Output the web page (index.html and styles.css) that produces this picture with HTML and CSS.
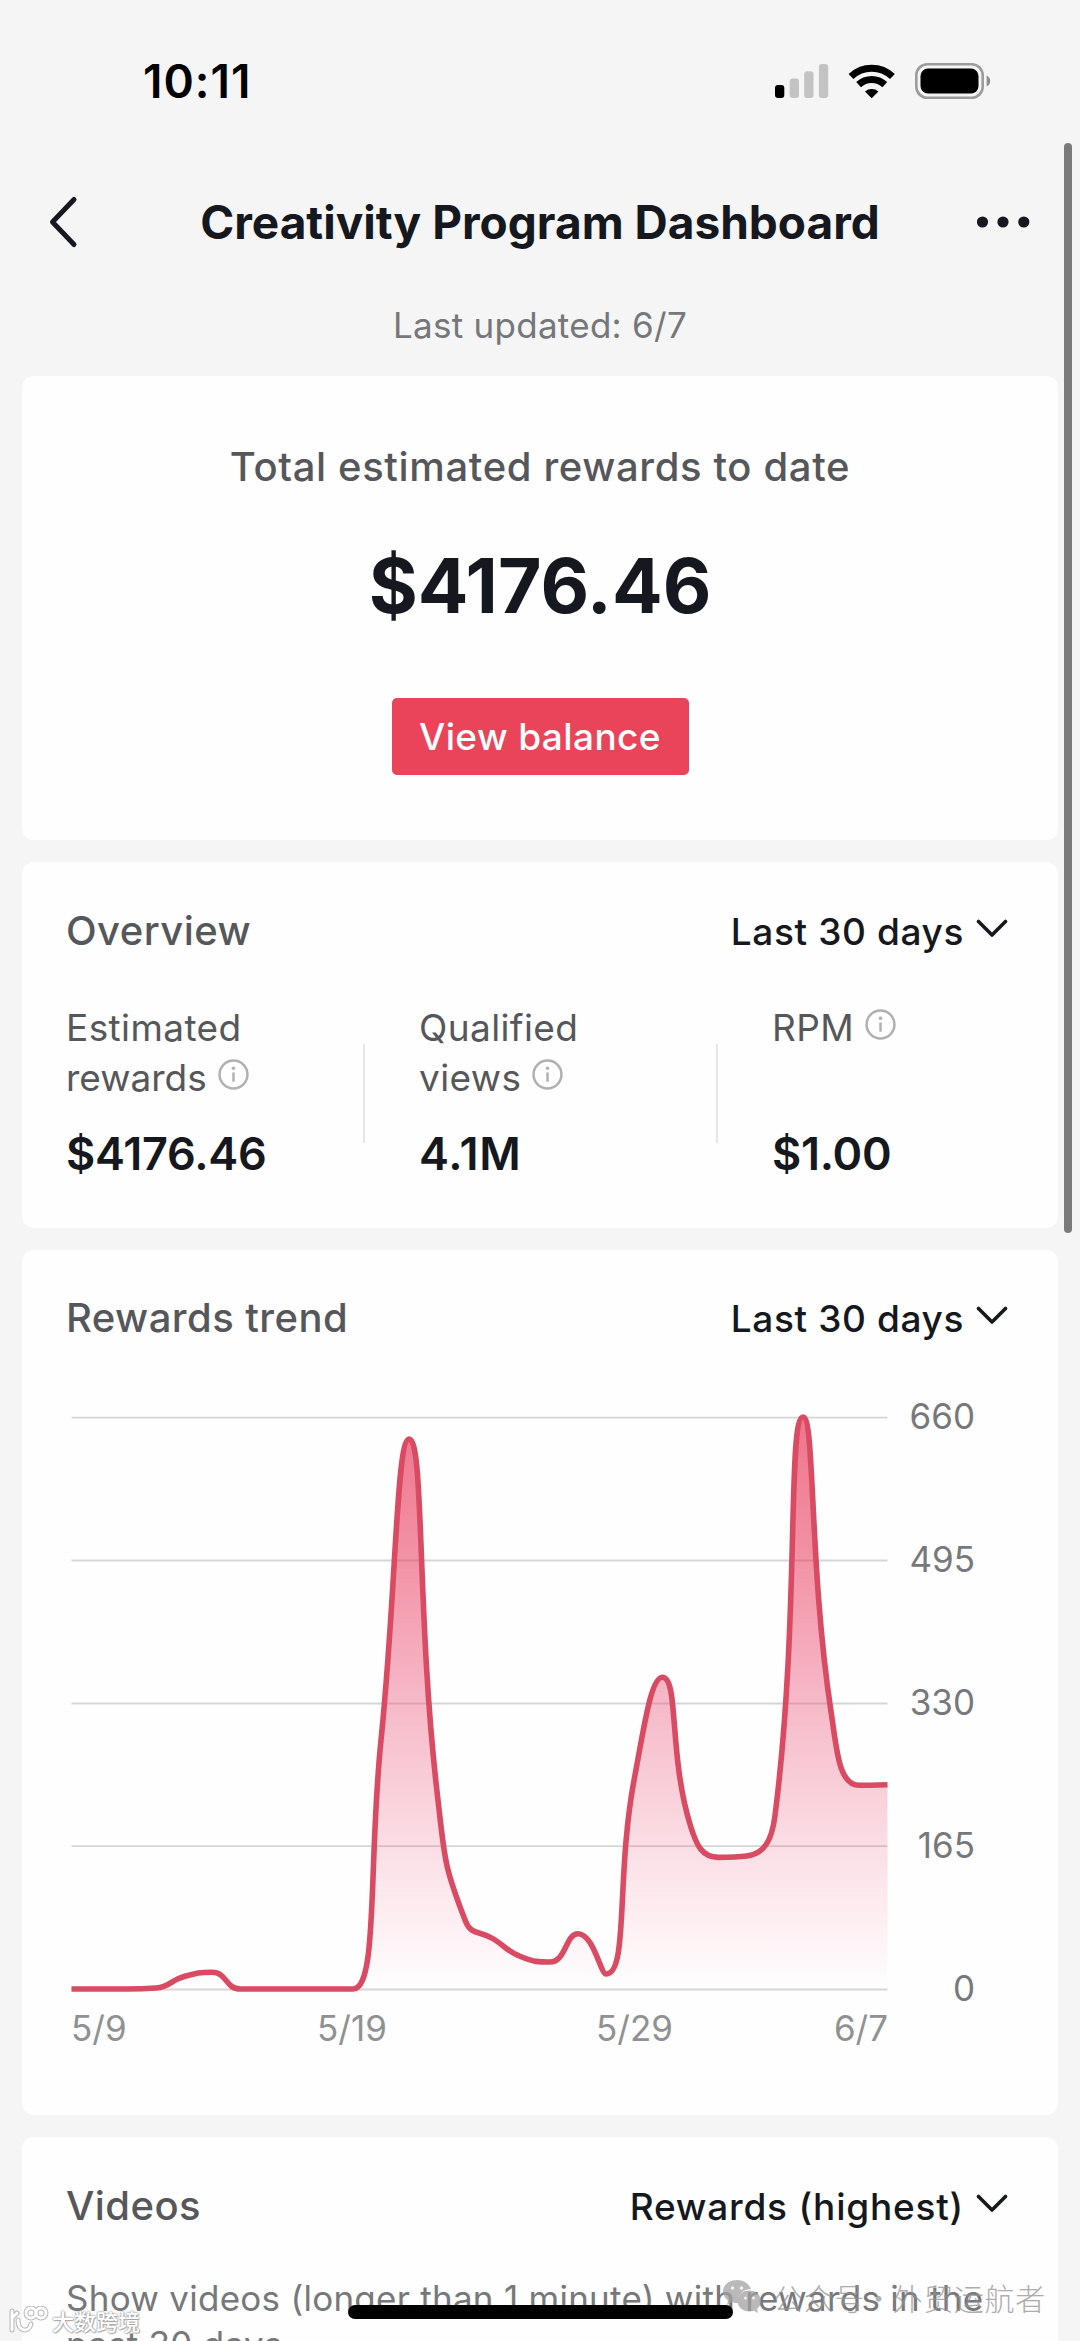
FILE: index.html
```html
<!DOCTYPE html>
<html lang="en">
<head>
<meta charset="utf-8">
<title>Creativity Program Dashboard</title>
<link rel="stylesheet" href="styles.css">
</head>
<body>
<div class="screen">
  <header class="status">
    <span class="time">10:11</span>
    <svg class="status-icons" width="220" height="40" viewBox="774 60 220 40">
      <rect x="775" y="84" width="9.3" height="13" rx="3"/>
      <g fill="#c3c3c3">
        <rect x="789.7" y="77.5" width="9.3" height="19.5" rx="3"/>
        <rect x="804.2" y="70.3" width="9.3" height="26.7" rx="3"/>
        <rect x="818.9" y="63" width="9.3" height="34" rx="3"/>
      </g>
      <g fill="none" stroke="#000" stroke-width="7">
        <path d="M851 75.5A30 30 0 0 1 892.4 75.5"/>
        <path d="M858.6 83.6A19.2 19.2 0 0 1 884.8 83.6"/>
      </g>
      <path d="M871.7 97.2L865 90.4A10.5 10.5 0 0 1 878.4 90.4Z"/>
      <rect x="916.3" y="63.3" width="66.4" height="33.4" rx="11" fill="none" stroke="#9c9c9c" stroke-width="2.6"/>
      <rect x="920.5" y="67.5" width="58" height="25" rx="7.5"/>
      <path d="M986.6 74.5Q990.2 76 990.2 80T986.6 85.5Z" fill="#8f8f8f"/>
    </svg>
  </header>
  <nav class="nav">
    <svg class="back" width="34" height="56" viewBox="0 0 34 56"><path d="M28 5.5L6.5 28L28 50.5"/></svg>
    <h1>Creativity Program Dashboard</h1>
    <svg class="more" width="54" height="14" viewBox="0 0 54 14"><circle cx="5.5" cy="7" r="5.6"/><circle cx="26" cy="7" r="5.6"/><circle cx="46.8" cy="7" r="5.6"/></svg>
  </nav>
  <p class="updated">Last updated: 6/7</p>

  <main class="cards">
    <section class="card total">
      <h2 class="total-label">Total estimated rewards to date</h2>
      <p class="total-value">$4176.46</p>
      <button class="balance">View balance</button>
    </section>

    <section class="card overview">
      <div class="head">
        <h2>Overview</h2>
        <span class="picker"><span class="days">Last 30 days</span><svg class="chev" width="32" height="20" viewBox="0 0 32 20"><path d="M2.5 2.5L16 16L29.5 2.5"/></svg></span>
      </div>
      <div class="metrics">
        <div class="metric">
          <p class="name"><span>Estimated</span><br><span class="tight">rewards</span><svg class="info" viewBox="0 0 30 30"><circle cx="15" cy="15" r="13.5"/><path d="M15 13V22"/><circle class="dot" cx="15" cy="9" r="1.7"/></svg></p>
          <p class="value long">$4176.46</p>
        </div>
        <i class="rule"></i>
        <div class="metric">
          <p class="name"><span>Qualified</span><br><span>views</span><svg class="info" viewBox="0 0 30 30"><circle cx="15" cy="15" r="13.5"/><path d="M15 13V22"/><circle class="dot" cx="15" cy="9" r="1.7"/></svg></p>
          <p class="value wide">4.1M</p>
        </div>
        <i class="rule"></i>
        <div class="metric">
          <p class="name"><span>RPM</span><svg class="info" viewBox="0 0 30 30"><circle cx="15" cy="15" r="13.5"/><path d="M15 13V22"/><circle class="dot" cx="15" cy="9" r="1.7"/></svg></p>
          <p class="value">$1.00</p>
        </div>
      </div>
    </section>

    <section class="card trend">
      <div class="head">
        <h2>Rewards trend</h2>
        <span class="picker"><span class="days">Last 30 days</span><svg class="chev" width="32" height="20" viewBox="0 0 32 20"><path d="M2.5 2.5L16 16L29.5 2.5"/></svg></span>
      </div>
      <svg class="chart" width="1036" height="720" viewBox="22 1380 1036 720">
        <defs>
          <linearGradient id="fade" x1="0" y1="1417" x2="0" y2="1989" gradientUnits="userSpaceOnUse">
            <stop offset="0" stop-color="#e83a5c" stop-opacity=".7"/>
            <stop offset=".25" stop-color="#e83a5c" stop-opacity=".55"/>
            <stop offset=".5" stop-color="#e8446c" stop-opacity=".37"/>
            <stop offset=".78" stop-color="#e8446c" stop-opacity=".15"/>
            <stop offset="1" stop-color="#e8446c" stop-opacity="0"/>
          </linearGradient>
        </defs>
        <g stroke="#d6d6d6" stroke-width="1.8">
          <path d="M71.5 1417.7H887.5M71.5 1560.5H887.5M71.5 1703.5H887.5M71.5 1846.2H887.5M71.5 1989.5H887.5"/>
        </g>
        <path id="area" fill="url(#fade)"/>
        <path id="line" fill="none" stroke="#d84b63" stroke-width="5.6" stroke-linejoin="round"/>
        <g class="axis" text-anchor="end">
          <text x="975" y="1429">660</text>
          <text x="975" y="1572">495</text>
          <text x="975" y="1715">330</text>
          <text x="975" y="1858">165</text>
          <text x="975" y="2001">0</text>
        </g>
        <g class="axis dates">
          <text x="71" y="2041">5/9</text>
          <text x="317" y="2041">5/19</text>
          <text x="596" y="2041">5/29</text>
          <text x="888" y="2041" text-anchor="end">6/7</text>
        </g>
      </svg>
    </section>

    <section class="card videos">
      <div class="head">
        <h2>Videos</h2>
        <span class="picker"><span class="sort">Rewards (highest)</span><svg class="chev" width="32" height="20" viewBox="0 0 32 20"><path d="M2.5 2.5L16 16L29.5 2.5"/></svg></span>
      </div>
      <p class="note">Show videos (longer than 1 minute) with rewards in the<br>past 30 days.</p>
    </section>
  </main>

  <div class="scrollbar"></div>
  <div class="home"></div>
  <div class="account">
    <svg width="38" height="34" viewBox="0 0 38 34"><path fill="#a2a2a2" d="M14 0C6 0 0 5 0 11.5C0 15 2 18.5 5 20.5L4 25L9 22.3Q12 23.3 15 23C14 14 21 9 28 9C26 3.5 20.5 0 14 0Z"/><path fill="#a2a2a2" d="M26.5 10.5C19 10.5 14.5 15.5 14.5 21C14.5 27 20 31.5 26.5 31.5Q29 31.5 31 30.7L35 33L34 29C36.5 27 38 24.3 38 21C38 15.5 33 10.5 26.5 10.5Z"/><g fill="#eee"><circle cx="9.5" cy="8" r="1.8"/><circle cx="18.5" cy="8" r="1.8"/><circle cx="22.5" cy="18" r="1.5"/><circle cx="30.5" cy="18" r="1.5"/></g></svg>
    <span>公众号 · 外贸运航者</span>
  </div>
  <div class="brand">
    <svg width="40" height="28" viewBox="0 0 40 28" fill="none" stroke-linecap="round"><g stroke="#bbb" stroke-width="5"><path d="M3 5V24M3 12L8 7M9 14C9 26 20 27 22 18"/><circle cx="22" cy="7" r="5"/><circle cx="32" cy="7" r="5"/></g><g stroke="#fff" stroke-width="2.8"><path d="M3 5V24M3 12L8 7M9 14C9 26 20 27 22 18"/><circle cx="22" cy="7" r="5"/><circle cx="32" cy="7" r="5"/></g></svg>
    <span>大数跨境</span>
  </div>
</div>
<script src="chart.js"></script>
</body>
</html>
```
FILE: styles.css
```css
* { box-sizing: border-box; margin: 0; padding: 0; }
html, body { width: 1080px; height: 2341px; overflow: hidden; }
body { background: #f5f5f5; font-family: Inter, "Liberation Sans", sans-serif; color: #161820; }
.screen { position: relative; height: 2341px; overflow: hidden; }
h1, h2, p, span, button { white-space: nowrap; }

.status { height: 161px; display: flex; align-items: center; justify-content: space-between; padding: 0 86px 0 143px; }
.time { font-size: 46px; font-weight: 600; color: #000; line-height: 50px; letter-spacing: 1px; }

.nav { height: 122px; display: grid; grid-template-columns: 103px 1fr 103px; align-items: center; }
.nav h1 { font-size: 46px; font-weight: 700; line-height: 56px; text-align: center; }
.back { margin-left: 46px; fill: none; stroke: #161820; stroke-width: 5; stroke-linecap: round; stroke-linejoin: round; }
.more { fill: #161820; }
.updated { height: 93px; line-height: 85px; text-align: center; font-size: 35px; letter-spacing: .27px; color: #76777a; }

.cards { display: flex; flex-direction: column; gap: 22px; padding: 0 22px; }
.card { background: #fefefe; border-radius: 12px; flex: none; }
.total { height: 464px; padding-top: 66px; display: flex; flex-direction: column; align-items: center; }
.total-label { font-size: 40px; line-height: 49px; font-weight: 500; letter-spacing: .63px; color: #56575b; }
.total-value { margin-top: 50px; font-size: 75px; line-height: 90px; font-weight: 700; }
.balance { margin-top: 67px; width: 297px; height: 77px; border: 0; border-radius: 5px; background: #ea445a; color: #fff; font: 500 37px/77px Inter, sans-serif; letter-spacing: .4px; }

.head { display: flex; justify-content: space-between; align-items: center; height: 50px; padding: 0 50px 0 44px; }
.head h2 { font-size: 40px; font-weight: 500; line-height: 50px; letter-spacing: .45px; color: #56575b; }
.picker { display: flex; align-items: center; gap: 12px; font-size: 37px; line-height: 50px; font-weight: 500; padding-top: 1px; }
.days { letter-spacing: .62px; }
.sort { letter-spacing: .78px; }
.chev { fill: none; stroke: #161820; stroke-width: 3.6; stroke-linecap: round; stroke-linejoin: round; margin-top: -5px; }

.overview { height: 366px; padding-top: 44px; }
.metrics { display: flex; margin: 47px 44px 0; }
.metric { width: 297px; flex: none; }
.rule { width: 2px; height: 99px; margin: 41px 54px 0 0; flex: none; background: #e6e6e6; }
.name { height: 99px; font-size: 37px; line-height: 49.5px; letter-spacing: .4px; color: #56575b; }
.tight { letter-spacing: 0; }
.value { margin-top: 27px; font-size: 45px; line-height: 50px; font-weight: 600; letter-spacing: -.3px; }
.value.long { letter-spacing: -.25px; }
.value.wide { letter-spacing: .8px; }
.info { width: 31px; height: 31px; margin-left: 11px; fill: none; stroke: #b0b0b2; stroke-width: 2.4; vertical-align: 1px; }
.info .dot { fill: #b0b0b2; stroke: none; }

.trend { height: 865px; padding-top: 43px; }
.chart { display: block; margin-top: 37px; }
.axis { font-size: 35px; fill: #77787b; }
.dates { fill: #909193; }

.videos { height: 260px; padding-top: 44px; }
.note { margin: 44px 44px 0; font-size: 35px; line-height: 46px; letter-spacing: .26px; color: #77787b; }

.scrollbar { position: absolute; left: 1064px; top: 143px; width: 8px; height: 1090px; border-radius: 4px; background: #7b7b7b; }
.home { position: absolute; left: 348px; top: 2305px; width: 385px; height: 14px; border-radius: 7px; background: #000; }
.account { position: absolute; left: 723px; top: 2280px; display: flex; gap: 12px; align-items: center; opacity: .75; color: #939393; font: 300 30px/34px "Noto Sans CJK SC", sans-serif; letter-spacing: .7px; word-spacing: -9px; }
.brand { position: absolute; left: 9px; top: 2306px; display: flex; gap: 3px; align-items: center; color: #fff; font: 500 22px/28px "Noto Sans CJK SC", sans-serif; text-shadow: 0 0 2px #999, 0 0 2px #999, 1px 1px 1px #bbb; }
```
FILE: chart.js
```js
// One height per day, 5/9 to 6/7, joined by a smooth curve whose
// control points stay inside the box of each segment.
const heights = [
  1989, 1989, 1989, 1988, 1976.5, 1972.3, 1989, 1989, 1989, 1989,
  1989, 1740, 1439, 1794, 1921, 1939, 1957, 1962, 1933.8, 1974,
  1779, 1677.3, 1826, 1857.4, 1856, 1816, 1417, 1713, 1785.3, 1784.8
];
const smooth = 0.5;
const step = 816 / (heights.length - 1);
const pts = heights.map((y, i) => [71.5 + i * step, y]);
const clamp = (v, a, b) => Math.max(Math.min(a, b), Math.min(Math.max(a, b), v));
let d = `M${pts[0]}`;
let out = pts[0];
for (let i = 1; i < pts.length; i++) {
  const p = pts[i], prev = pts[i - 1], next = pts[i + 1];
  let into = p, after = p;
  if (next) {
    const lp = Math.hypot(p[0] - prev[0], p[1] - prev[1]);
    const ln = Math.hypot(next[0] - p[0], next[1] - p[1]);
    const ratio = ln / (ln + lp);
    after = p.map((v, k) => clamp(v + (next[k] - prev[k]) * smooth * ratio, v, next[k]));
    into = p.map((v, k) => clamp(v - (after[k] - v) * lp / ln, prev[k], v));
    after = p.map((v, k) => v + (v - into[k]) * ln / lp);
  }
  d += `C${out} ${into} ${p}`;
  out = after;
}
document.getElementById('line').setAttribute('d', d);
document.getElementById('area').setAttribute('d', `${d}V1989.5H71.5Z`);
```
